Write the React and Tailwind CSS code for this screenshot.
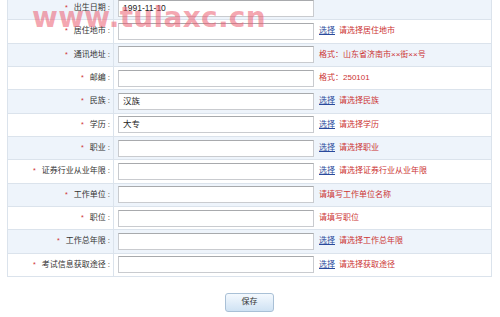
import React from 'react';

const rows = [
  { label: '出生日期', value: '1991-11-10' },
  { label: '居住地市', pick: true, hint: '请选择居住地市' },
  { label: '通讯地址', hint: '格式：山东省济南市××街××号' },
  { label: '邮编', hint: '格式：250101' },
  { label: '民族', value: '汉族', pick: true, hint: '请选择民族' },
  { label: '学历', value: '大专', pick: true, hint: '请选择学历' },
  { label: '职业', pick: true, hint: '请选择职业' },
  { label: '证券行业从业年限', pick: true, hint: '请选择证券行业从业年限' },
  { label: '工作单位', hint: '请填写工作单位名称' },
  { label: '职位', hint: '请填写职位' },
  { label: '工作总年限', pick: true, hint: '请选择工作总年限' },
  { label: '考试信息获取途径', pick: true, hint: '请选择获取途径' },
];

const font = { fontFamily: '"Liberation Sans", "Noto Sans CJK SC", sans-serif' };

const App = () => {
  return (
    <div className="relative w-[500px] h-[317px] bg-white overflow-hidden text-[8px] text-[#333]" style={font}>
      <div className="ml-[7px] w-[485px] mt-[-3px] border-l border-r border-[#dbe3ec]">
        {rows.map((row, i) => (
          <div
            key={i}
            className={`flex h-[23.33px] border-b border-[#dbe3ec] ${i % 2 === 0 ? 'bg-[#eef4fb]' : 'bg-white'}`}
          >
            <div className="w-[106px] flex items-center justify-end pr-[1px] border-r border-[#dbe3ec]">
              <span className="text-[#d03030] mr-[6px] text-[7px]">*</span>
              <span>{row.label}</span>
              <span className="ml-[2px] mr-[2px]">:</span>
            </div>
            <div className="w-[202px] flex items-center pl-[4px]">
              <div className="w-[196px] h-[17px] bg-white border border-[#c9cbcf] border-t-[#a8aaad] flex items-center pl-[4px] text-[8.5px] text-[#222]">
                {row.value}
              </div>
            </div>
            <div className="flex-1 flex items-center pl-[3px]">
              {row.pick && <span className="text-[#2a4a9c] underline mr-[4px]">选择</span>}
              <span className="text-[#cc3333]">{row.hint}</span>
            </div>
          </div>
        ))}
      </div>
      <div className="w-[499px] flex justify-center mt-[16px]">
        <button className="w-[49px] h-[19px] rounded-[3px] border border-[#a9c0d6] bg-gradient-to-b from-[#f4f9fe] to-[#cfe2f3] text-[8px] text-[#333]">
          保存
        </button>
      </div>
      <div
        className="absolute left-[32px] top-[4px] text-[28px] font-bold leading-none tracking-[0.3px] text-[rgba(236,90,110,0.55)] pointer-events-none"
        style={{ fontFamily: '"DejaVu Sans", sans-serif' }}
      >
        www.tulaxc.cn
      </div>
    </div>
  );
};

export default App;
